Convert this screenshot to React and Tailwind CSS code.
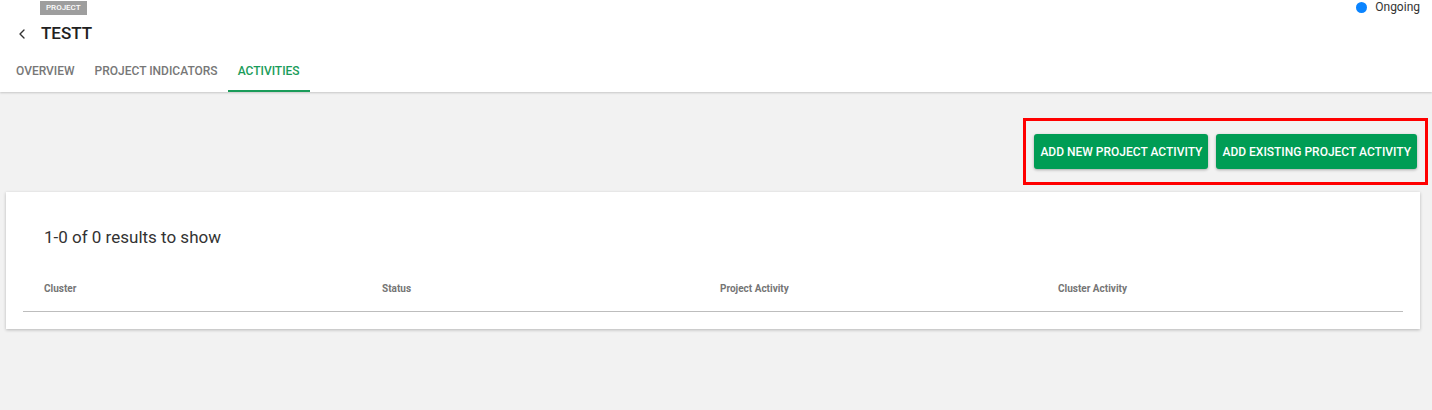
import { ChevronLeft } from 'lucide-react'

const tabs = ['OVERVIEW', 'PROJECT INDICATORS', 'ACTIVITIES']
const columns = ['Cluster', 'Status', 'Project Activity', 'Cluster Activity']

export default function App() {
  return (
    <div className="min-h-[410px] bg-[#f2f2f2] font-['Roboto',sans-serif]">
      {/* Header */}
      <div className="relative bg-white shadow-[0_1px_2px_rgba(0,0,0,0.18)]">
        <div className="flex pl-[40px] pt-[1px]">
          <span className="block h-[14px] bg-[#9e9e9e] px-[6px] text-[8px] leading-[14px] font-medium text-white">
            PROJECT
          </span>
        </div>
        <div className="mt-[9px] flex h-[20px] items-center">
          <ChevronLeft size={16} strokeWidth={2} className="ml-[14px] text-[#333]" />
          <h1 className="ml-[11px] text-[17px] font-medium text-[#212121]">TESTT</h1>
        </div>
        <div className="mt-[8px] flex h-[40px] pl-[6px]">
          {tabs.map((t) => (
            <div
              key={t}
              className={
                t === 'ACTIVITIES'
                  ? 'flex items-center border-b-2 border-[#1a9c5a] px-[10px] text-[12px] font-medium text-[#1a9c5a]'
                  : 'flex items-center border-b-2 border-transparent px-[10px] text-[12px] font-medium text-[#777]'
              }
            >
              {t}
            </div>
          ))}
        </div>
        <div className="absolute right-[12px] top-0 flex h-[14px] items-center gap-[8px] text-[12px] leading-[14px] text-[#333]">
          <span className="h-[11px] w-[11px] rounded-full bg-[#0a84ff]" />
          Ongoing
        </div>
      </div>

      {/* Actions */}
      <div className="flex justify-end pr-[4px] pt-[26px]">
        <div className="flex gap-[8px] border-[3px] border-[#ff0000] px-[8px] py-[13px]">
          <button className="h-[35px] rounded-[3px] bg-[#009d55] px-[6px] text-[12px] font-medium text-white shadow-[0_1px_3px_rgba(0,0,0,0.3)]">
            ADD NEW PROJECT ACTIVITY
          </button>
          <button className="h-[35px] rounded-[3px] bg-[#009d55] px-[6px] text-[12px] font-medium text-white shadow-[0_1px_3px_rgba(0,0,0,0.3)]">
            ADD EXISTING PROJECT ACTIVITY
          </button>
        </div>
      </div>

      {/* Card */}
      <div className="ml-[6px] mr-[12px] mt-[7px] bg-white pb-[17px] shadow-[0_1px_3px_rgba(0,0,0,0.25)]">
        <div className="pl-[38px] pt-[33px] text-[17px] text-[#333]">1-0 of 0 results to show</div>
        <div className="mx-[17px] mt-[30px] grid grid-cols-[338px_338px_338px_1fr] border-b border-[#bdbdbd] pb-[15px] pl-[21px]">
          {columns.map((c) => (
            <div key={c} className="text-[10px] font-bold text-[#757575]">
              {c}
            </div>
          ))}
        </div>
      </div>
    </div>
  )
}
